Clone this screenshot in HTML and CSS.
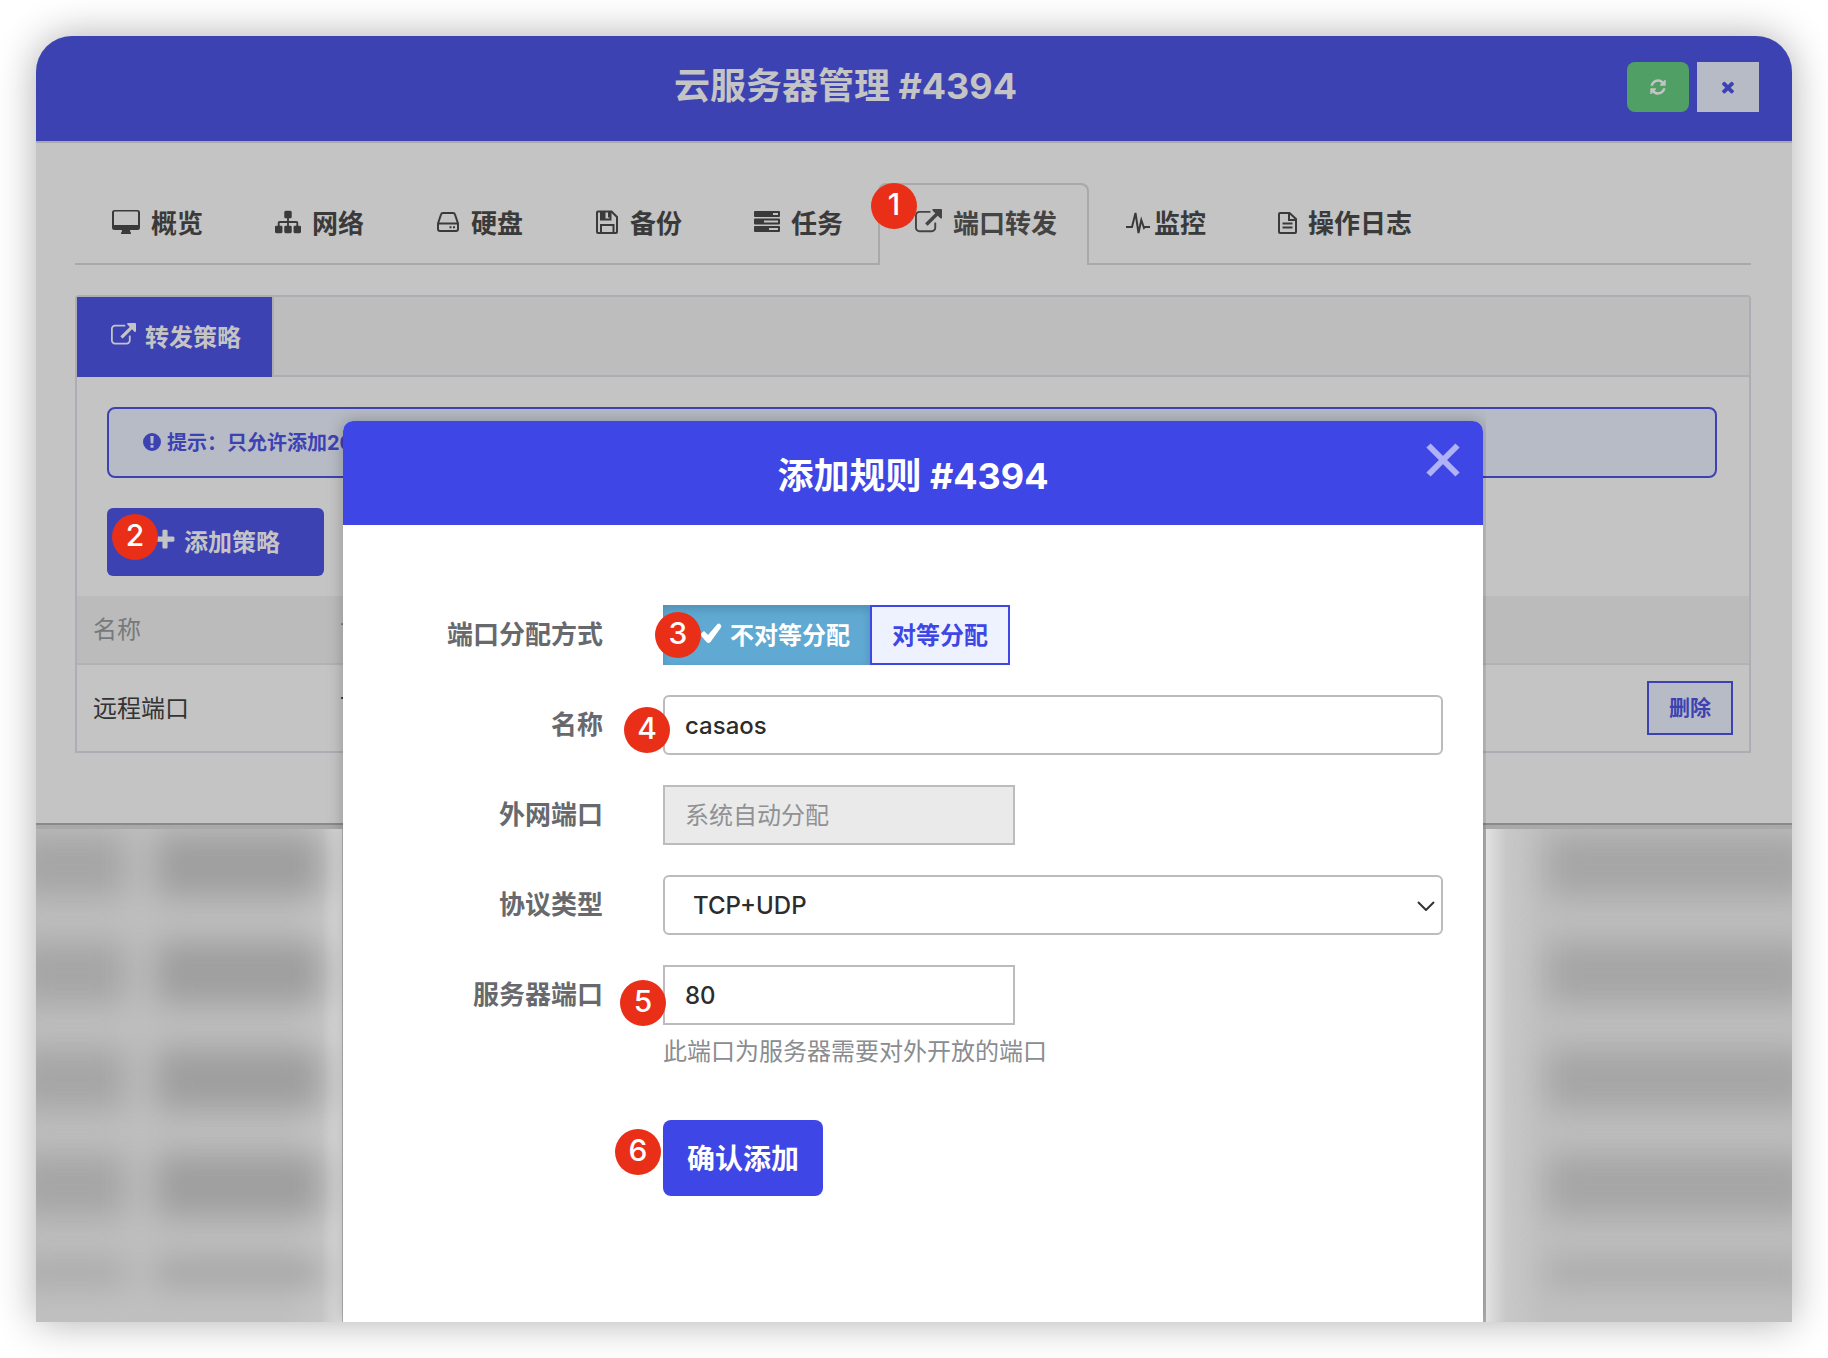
FILE: index.html
```html
<!DOCTYPE html>
<html lang="zh-CN">
<head>
  <meta charset="UTF-8">
  <meta name="viewport" content="width=device-width, initial-scale=1.0">
  <title>云服务器管理 #4394</title>
  <link rel="stylesheet" href="styles.css">
</head>
<body>
  <!-- 图标 -->
  <svg width="0" height="0" class="sprite" aria-hidden="true">
    <symbol id="i-external" viewBox="0 0 1792 1792"><path d="M1408 928v320q0 119-84.500 203.500t-203.500 84.500h-832q-119 0-203.500-84.500t-84.500-203.500v-832q0-119 84.500-203.500t203.500-84.500h704q14 0 23 9t9 23v64q0 14-9 23t-23 9h-704q-66 0-113 47t-47 113v832q0 66 47 113t113 47h832q66 0 113-47t47-113v-320q0-14 9-23t23-9h64q14 0 23 9t9 23zm384-864v512q0 26-19 45t-45 19-45-19l-176-176-652 652q-10 10-23 10t-23-10l-114-114q-10-10-10-23t10-23l652-652-176-176q-19-19-19-45t19-45 45-19h512q26 0 45 19t19 45z"/></symbol>
  </svg>

  <div class="window">
    <section class="manage">
      <header class="manage-header">
        <h1>云服务器管理 #4394</h1>
        <div class="manage-actions">
          <button type="button" class="btn-refresh" aria-label="刷新">
            <svg width="18" height="18" viewBox="0 0 1792 1792"><path d="M1639 1056q0 5-1 7-64 268-268 434.500t-478 166.500q-146 0-282.500-55t-243.500-157l-129 129q-19 19-45 19t-45-19-19-45v-448q0-26 19-45t45-19h448q26 0 45 19t19 45-19 45l-137 137q71 66 161 102t187 36q134 0 250-65t186-179q11-17 53-117 8-23 30-23h192q13 0 22.500 9.500t9.500 22.500zm25-800v448q0 26-19 45t-45 19h-448q-26 0-45-19t-19-45 19-45l138-138q-148-137-349-137-134 0-250 65t-186 179q-11 17-53 117-8 23-30 23h-199q-13 0-22.500-9.500t-9.500-22.500v-7q65-268 270-434.500t480-166.500q146 0 284 55.500t245 156.500l130-129q19-19 45-19t45 19 19 45z"/></svg>
          </button>
          <button type="button" class="btn-exit" aria-label="关闭">
            <svg width="18" height="18" viewBox="0 0 1792 1792"><path d="M1490 1322q0 40-28 68l-136 136q-28 28-68 28t-68-28l-294-294-294 294q-28 28-68 28t-68-28l-136-136q-28-28-28-68t28-68l294-294-294-294q-28-28-28-68t28-68l136-136q28-28 68-28t68 28l294 294 294-294q28-28 68-28t68 28l136 136q28 28 28 68t-28 68l-294 294 294 294q28 28 28 68z"/></svg>
          </button>
        </div>
      </header>

      <div class="manage-body">
        <nav class="tabs">
          <a href="#" class="tab">
            <svg width="28" height="26" viewBox="0 0 28 26"><path fill-rule="evenodd" d="M2.500 1h23Q28 1 28 3.500v15q0 2.500-2.500 2.500H18q0 2 1 3v1H9v-1q1-1 1-3H2.500Q0 21 0 18.500v-15Q0 1 2.500 1zM3 2.500Q2 2.500 2 3.500V16h24V3.500q0-1-1-1z"/></svg>
            概览
          </a>
          <a href="#" class="tab">
            <svg width="26" height="26" viewBox="0 0 1792 1792"><path d="M1792 1248v320q0 40-28 68t-68 28h-320q-40 0-68-28t-28-68v-320q0-40 28-68t68-28h96v-192h-512v192h96q40 0 68 28t28 68v320q0 40-28 68t-68 28h-320q-40 0-68-28t-28-68v-320q0-40 28-68t68-28h96v-192h-512v192h96q40 0 68 28t28 68v320q0 40-28 68t-68 28h-320q-40 0-68-28t-28-68v-320q0-40 28-68t68-28h96v-192q0-52 38-90t90-38h512v-192h-96q-40 0-68-28t-28-68v-320q0-40 28-68t68-28h320q40 0 68 28t28 68v320q0 40-28 68t-68 28h-96v192h512q52 0 90 38t38 90v192h96q40 0 68 28t28 68z"/></svg>
            网络
          </a>
          <a href="#" class="tab">
            <svg width="24" height="26" viewBox="0 0 24 26" class="line"><path d="M2 14.500L5 5.500q.4-1.500 2-1.500h10q1.600 0 2 1.500l3 9V20q0 2-2 2H4q-2 0-2-2zM2 14.500h20"/><path d="M13.500 18.300h2M17 18.300h2"/></svg>
            硬盘
          </a>
          <a href="#" class="tab">
            <svg width="24" height="26" viewBox="0 0 24 26" class="line"><path d="M3 2.500h13.500L22 8v15q0 1-1 1H3q-1 0-1-1V3.500q0-1 1-1zM6 2.500v8h9.500v-8M6 24v-8h12.500v8"/><path class="solid" d="M6 2.500h4.500v8H6zM13 2.500h2v6h-2z"/></svg>
            备份
          </a>
          <a href="#" class="tab">
            <svg width="26" height="26" viewBox="0 0 26 26"><path fill-rule="evenodd" d="M1 2h24q1 0 1 1v4q0 1-1 1H1Q0 8 0 7V3q0-1 1-1zM19 4v2h5V4zM1 9.500h24q1 0 1 1v4q0 1-1 1H1q-1 0-1-1v-4q0-1 1-1zM10 11.500v2h14v-2zM1 17h24q1 0 1 1v4q0 1-1 1H1q-1 0-1-1v-4q0-1 1-1zM15 19v2h9v-2z"/></svg>
            任务
          </a>
          <a href="#" class="tab active">
            <span class="step step-1">1</span>
            <svg width="27" height="27"><use href="#i-external"/></svg>
            端口转发
          </a>
          <a href="#" class="tab tab-monitor">
            <svg width="24" height="26" viewBox="0 0 24 26" class="line"><path d="M0 18h6L9.500 4l3 20 2.800-13 2.700 8 1-1h5"/></svg>
            监控
          </a>
          <a href="#" class="tab">
            <svg width="19" height="26" viewBox="0 0 19 26" class="line"><path d="M2 4h9.500L18 10v13q0 1-1 1H2q-1 0-1-1V5q0-1 1-1zM11 4v7h7M4.500 14.500h10M4.500 18.500h10"/></svg>
            操作日志
          </a>
        </nav>

        <div class="panel">
          <div class="panel-tabs">
            <a href="#" class="panel-tab">
              <svg width="25" height="25"><use href="#i-external"/></svg>
              转发策略
            </a>
          </div>
          <div class="notice">
            <svg width="18" height="18" viewBox="0 0 18 18"><path fill-rule="evenodd" d="M9 0a9 9 0 1 1 0 18a9 9 0 1 1 0-18zM7.300 3l.4 7.500h2.600l.4-7.500zM7.500 12v2.800h3V12z"/></svg>
            提示：只允许添加20条策略
          </div>
          <button type="button" class="btn-add">
            <span class="step step-2">2</span>
            <svg width="24" height="24" viewBox="0 0 1792 1792"><path d="M1600 736v192q0 40-28 68t-68 28h-416v416q0 40-28 68t-68 28h-192q-40 0-68-28t-28-68v-416h-416q-40 0-68-28t-28-68v-192q0-40 28-68t68-28h416v-416q0-40 28-68t68-28h192q40 0 68 28t28 68v416h416q40 0 68 28t28 68z"/></svg>
            添加策略
          </button>
          <table>
            <thead>
              <tr><th class="col-name">名称</th><th>协议</th><th></th></tr>
            </thead>
            <tbody>
              <tr>
                <td>远程端口</td>
                <td>TCP</td>
                <td class="col-action"><button type="button" class="btn-delete">删除</button></td>
              </tr>
            </tbody>
          </table>
        </div>
      </div>
    </section>

    <!-- 背后模糊的列表 -->
    <div class="behind" aria-hidden="true">
      <div class="behind-col">
        <div class="behind-row"><i></i><i></i></div>
        <div class="behind-row"><i></i><i></i></div>
        <div class="behind-row"><i></i><i></i></div>
        <div class="behind-row"><i></i><i></i></div>
        <div class="behind-row"><i></i><i></i></div>
      </div>
      <div class="behind-col behind-right">
        <div class="behind-row"><i></i></div>
        <div class="behind-row"><i></i></div>
        <div class="behind-row"><i></i></div>
        <div class="behind-row"><i></i></div>
        <div class="behind-row"><i></i></div>
      </div>
    </div>

    <!-- 添加规则弹窗 -->
    <div class="modal" role="dialog" aria-labelledby="modal-title">
      <header class="modal-header">
        <h2 id="modal-title">添加规则 #4394</h2>
        <button type="button" class="modal-close" aria-label="关闭">
          <svg width="34" height="34" viewBox="0 0 34 34"><path d="M2.500 2.500l29 29M31.500 2.500l-29 29"/></svg>
        </button>
      </header>
      <form class="modal-form">
        <div class="form-row">
          <span class="form-label">端口分配方式</span>
          <div class="form-field">
            <span class="step step-3">3</span>
            <div class="toggle">
              <button type="button" class="toggle-on">
                <svg width="24" height="24" viewBox="0 0 24 24"><path d="M1 13.500l4-3.500 4 4L18.500 3q1.500-1 3 .5t.5 3L11.500 21q-2 2-4 0z"/></svg>
                不对等分配
              </button>
              <button type="button" class="toggle-off">对等分配</button>
            </div>
          </div>
        </div>
        <div class="form-row">
          <label class="form-label" for="name">名称</label>
          <div class="form-field">
            <span class="step step-4">4</span>
            <input type="text" id="name" value="casaos">
          </div>
        </div>
        <div class="form-row">
          <label class="form-label" for="outer">外网端口</label>
          <div class="form-field">
            <input type="text" id="outer" class="short" placeholder="系统自动分配" disabled>
          </div>
        </div>
        <div class="form-row">
          <label class="form-label" for="protocol">协议类型</label>
          <div class="form-field">
            <select id="protocol">
              <option>TCP+UDP</option>
            </select>
            <svg class="chevron" width="18" height="10" viewBox="0 0 18 10"><path d="M1 1l8 8 8-8"/></svg>
          </div>
        </div>
        <div class="form-row">
          <label class="form-label" for="port">服务器端口</label>
          <div class="form-field">
            <span class="step step-5">5</span>
            <input type="text" id="port" class="short" value="80">
            <p class="help">此端口为服务器需要对外开放的端口</p>
          </div>
        </div>
        <div class="form-row form-submit">
          <span class="form-label"></span>
          <div class="form-field">
            <span class="step step-6">6</span>
            <button type="submit" class="btn-submit">确认添加</button>
          </div>
        </div>
      </form>
    </div>
  </div>
</body>
</html>
```
FILE: styles.css
```css
* {
  box-sizing: border-box;
}
body {
  margin: 0;
  background: #ffffff;
  font-family: Inter, "Noto Sans CJK SC", sans-serif;
  font-size: 24px;
  color: #333333;
}
button, input, select {
  font-family: inherit;
  font-size: 24px;
  margin: 0;
}
button {
  cursor: pointer;
  border: none;
  font-weight: 700;
}
a {
  text-decoration: none;
}
svg {
  fill: currentColor;
  flex: none;
}
.sprite {
  position: absolute;
}
.line {
  fill: none;
  stroke: currentColor;
  stroke-width: 2;
}
.line .solid {
  fill: currentColor;
  stroke: none;
}

/* 外层窗口 */
.window {
  position: relative;
  display: flex;
  flex-direction: column;
  min-height: calc(100vh - 72px);
  margin: 36px;
  border-radius: 36px 36px 0 0;
  background: #bfbfbf;
  box-shadow: 0 0 40px rgba(0, 0, 0, 0.32);
}
.manage {
  background: #c4c4c4;
  border-radius: 36px 36px 0 0;
  border-bottom: 2px solid #8a8a8a;
}
.manage-header {
  display: flex;
  align-items: flex-start;
  height: 107px;
  padding: 26px 33px 0 28px;
  background: #3d42b3;
  border-bottom: 2px solid #aaaaac;
  border-radius: 36px 36px 0 0;
}
.manage-header h1 {
  flex: 1;
  margin: 0;
  text-align: center;
  font-size: 36px;
  line-height: 48px;
  color: #c4c4c4;
}
.manage-actions {
  display: flex;
  gap: 8px;
}
.manage-actions button {
  display: flex;
  align-items: center;
  justify-content: center;
  width: 62px;
  height: 50px;
}
.manage-actions .btn-refresh {
  background: #509f65;
  color: #c4c4c4;
  border-radius: 8px;
}
.manage-actions .btn-exit {
  background: #b7bbc5;
  color: #3d42b3;
}
.manage-body {
  padding: 40px 41px 70px 39px;
}

/* 主标签栏 */
.tabs {
  display: flex;
  border-bottom: 2px solid #a9a9a9;
  margin-bottom: 30px;
}
.tab {
  position: relative;
  display: flex;
  align-items: center;
  gap: 11px;
  height: 82px;
  margin-bottom: -2px;
  padding: 0 33px 8px 35px;
  border: 2px solid transparent;
  border-bottom: none;
  border-radius: 8px 8px 0 0;
  font-size: 26px;
  font-weight: 700;
  color: #3a3a3a;
}
.tab svg {
  margin-top: 2px;
}
.tab.active {
  padding-right: 30px;
  background: #c4c4c4;
  border-color: #a9a9a9;
  color: #444444;
}
.tab.tab-monitor {
  gap: 4px;
}

/* 转发策略面板 */
.panel {
  border: 2px solid #adadb3;
  border-radius: 4px 4px 0 0;
}
.panel-tabs {
  display: flex;
  background: #bdbdbd;
  border-bottom: 2px solid #adadb3;
}
.panel-tab {
  display: flex;
  align-items: center;
  gap: 9px;
  height: 80px;
  margin-bottom: -2px;
  padding: 0 31px 4px 34px;
  background: #3d42b3;
  color: #c4c4c4;
  font-weight: 700;
  box-shadow: 2px 0 0 #adadb3;
}
.notice {
  display: flex;
  align-items: center;
  gap: 6px;
  height: 71px;
  margin: 30px 32px 30px 30px;
  padding: 0 34px 2px;
  border: 2px solid #3d42b3;
  border-radius: 8px;
  background: #b7bbc5;
  color: #3d42b3;
  font-size: 20px;
  font-weight: 700;
}
.btn-add {
  position: relative;
  display: flex;
  align-items: center;
  gap: 7px;
  height: 68px;
  margin: 0 30px 20px;
  padding: 0 44px 4px 46px;
  border-radius: 6px;
  background: #3d42b3;
  color: #c4c4c4;
}
table {
  width: 100%;
  border-collapse: collapse;
}
th, td {
  padding: 0 16px 4px;
  text-align: left;
  font-weight: 400;
}
th {
  height: 68px;
  background: #bbbbbb;
  border-bottom: 2px solid #b2b2b5;
  color: #77797c;
}
td {
  height: 87px;
}
td.col-action {
  padding-bottom: 0;
  text-align: right;
}
.col-name {
  width: 247px;
}
.btn-delete {
  height: 54px;
  padding: 0 20px 4px;
  border: 2px solid #3d42b3;
  background: #b7bbc5;
  color: #3d42b3;
  font-size: 21px;
}

/* 模糊背景 */
.behind {
  flex: 1;
  display: flex;
  justify-content: space-between;
  min-height: 200px;
  border-top: 4px solid #a9a9a9;
  background: #b4b4b4;
}
.behind-col {
  display: grid;
  grid-template-rows: repeat(4, 107fr) 66fr;
  width: 306px;
  overflow: hidden;
  background: linear-gradient(to left, #e2e2e2, #c6c6c6 20px, #c0c0c0 60px);
}
.behind-right {
  background: linear-gradient(to right, #e2e2e2, #c8c8c8 20px, #c0c0c0 60px);
}
.behind-row {
  display: flex;
  gap: 28px;
  padding: 4px 20px 38px 0;
  margin-left: -20px;
  filter: blur(16px);
}
.behind-row i {
  flex: 4;
  background: #a5a5a5;
}
.behind-row i + i {
  flex: 6;
  background: #9e9e9e;
}
.behind-right .behind-row {
  margin: 0 -20px 0 0;
  padding-left: 60px;
  padding-right: 0;
}

/* 弹窗 */
.modal {
  position: absolute;
  top: 385px;
  bottom: 0;
  left: 0;
  right: 2px;
  width: 1140px;
  max-width: 100%;
  margin: 0 auto;
  border-radius: 10px 10px 0 0;
  background: #ffffff;
  box-shadow: 0 0 16px rgba(0, 0, 0, 0.25);
  clip-path: inset(-20px -3px 0 -20px);
}
.modal-header {
  position: relative;
  height: 104px;
  border-radius: 10px 10px 0 0;
  background: #3f46e6;
}
.modal-header h2 {
  margin: 0;
  padding-top: 4px;
  text-align: center;
  font-size: 36px;
  line-height: 102px;
  color: #ffffff;
}
.modal-close {
  position: absolute;
  top: 22px;
  right: 23px;
  display: flex;
  padding: 0;
  background: none;
}
.modal-close svg {
  stroke: #afb2f5;
  stroke-width: 6;
}
.modal-form {
  padding: 80px 40px 80px 61px;
}
.form-row {
  display: flex;
  gap: 60px;
  margin-bottom: 30px;
}
.form-label {
  width: 199px;
  text-align: right;
  font-size: 26px;
  font-weight: 700;
  line-height: 60px;
  color: #68696d;
}
.form-field {
  position: relative;
  flex: 1;
}
input, select {
  display: block;
  width: 100%;
  height: 60px;
  padding: 0 20px;
  border: 2px solid #bbbbc0;
  border-radius: 6px;
  background: #ffffff;
  color: #2c2c2c;
  font-weight: 500;
}
select {
  appearance: none;
  padding: 0 28px;
}
.short {
  width: 352px;
  border-radius: 0;
}
input:disabled {
  background: #eaeaea;
}
input::placeholder {
  color: #909194;
  font-weight: 400;
  opacity: 1;
}
.chevron {
  position: absolute;
  top: 26px;
  right: 8px;
  fill: none;
  stroke: #333333;
  stroke-width: 2;
  pointer-events: none;
}
.toggle {
  display: flex;
}
.toggle button {
  display: flex;
  align-items: center;
  gap: 7px;
  height: 60px;
  padding: 0 20px 4px;
}
.toggle .toggle-on {
  padding-left: 36px;
  background: #5fa9d3;
  color: #ffffff;
  box-shadow: inset 0 4px 10px rgba(0, 0, 0, 0.15);
}
.toggle .toggle-off {
  border: 2px solid #3f46e6;
  background: #eef2ff;
  color: #3f46e6;
}
.help {
  margin: 9px 0 0;
  line-height: 36px;
  color: #8a8c90;
}
.form-submit {
  margin-top: 50px;
}
.btn-submit {
  height: 76px;
  padding: 0 24px 2px;
  border-radius: 8px;
  background: #3f46e6;
  color: #ffffff;
  font-size: 28px;
}

/* 步骤编号 */
.step {
  position: absolute;
  z-index: 1;
  width: 46px;
  height: 46px;
  border-radius: 50%;
  background: #e92f17;
  color: #ffffff;
  text-align: center;
  font-size: 30px;
  font-weight: 500;
  line-height: 42px;
}
.step-1 {
  top: -2px;
  left: -9px;
}
.step-2 {
  top: 6px;
  left: 5px;
}
.step-3 {
  top: 7px;
  left: -8px;
}
.step-4 {
  top: 12px;
  left: -39px;
}
.step-5 {
  top: 15px;
  left: -43px;
}
.step-6 {
  top: 9px;
  left: -48px;
}
```
